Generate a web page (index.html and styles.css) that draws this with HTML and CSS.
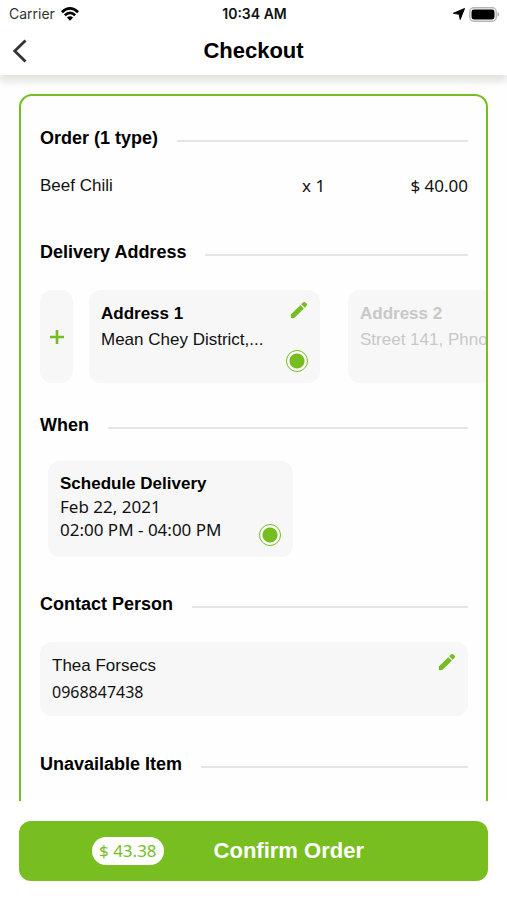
FILE: index.html
```html
<!DOCTYPE html>
<html lang="en">
<head>
<meta charset="utf-8">
<meta name="viewport" content="width=device-width, initial-scale=1">
<title>Checkout</title>
<link rel="stylesheet" href="styles.css">
</head>
<body>
<svg class="defs" width="0" height="0" aria-hidden="true">
  <symbol id="pencil" viewBox="0 0 18 18">
    <path d="M1 17C.6 15 .7 13.600 1.300 13L10.300 4.200 13.800 7.700 4.800 16.600C4 17.300 2.500 17.400 1 17ZM11.300 3.200 12.900 1.600Q14.300.3 15.800 1.700L16.400 2.300Q17.800 3.700 16.400 5.100L14.800 6.700Z"/>
  </symbol>
</svg>
<header class="top">
  <div class="status">
    <div class="carrier">
      <span>Carrier</span>
      <svg width="18" height="14" viewBox="0 0 18 14" aria-hidden="true">
        <g fill="none" stroke="#000" stroke-width="2.600">
          <path d="M.9 5.200Q9-2.400 17.100 5.200"/>
          <path d="M3.800 8.200Q9 3.400 14.200 8.200"/>
        </g>
        <path d="M5.900 10.500Q9 7.900 12.100 10.500L9 13.700Z"/>
      </svg>
    </div>
    <time class="clock">10:34 AM</time>
    <div class="indicators">
      <svg width="12" height="12" viewBox="0 0 12 12" aria-hidden="true"><path d="M11.500.5 7.200 11.500 6.200 6.300.4 5.300Z" stroke="#000" stroke-linejoin="round"/></svg>
      <svg width="31" height="15" viewBox="0 0 31 15" aria-hidden="true">
        <rect x=".8" y=".8" width="26.400" height="13.400" rx="4" fill="#fff" stroke="#b5b5b5" stroke-width="1.400"/>
        <rect x="2.500" y="2.500" width="23" height="10" rx="2.400"/>
        <path d="M28.500 5Q30.300 5.800 30.300 7.500T28.500 10Z" fill="#b5b5b5"/>
      </svg>
    </div>
  </div>
  <div class="navbar">
    <button class="back" type="button" aria-label="Back">
      <svg width="14" height="24" viewBox="0 0 14 24" aria-hidden="true"><path d="M12.500 1.500 1.700 12 12.500 22.500" fill="none" stroke="#333" stroke-width="2.800"/></svg>
    </button>
    <h1>Checkout</h1>
  </div>
</header>
<main>
  <div class="sheet">
    <section class="order">
      <h2>Order (1 type)</h2>
      <div class="item"><span>Beef Chili</span><span class="num">x 1</span><span class="num amount">$ 40.00</span></div>
    </section>
    <section class="delivery">
      <h2>Delivery Address</h2>
      <div class="addresses">
        <button class="add" type="button" aria-label="Add address">
          <svg width="14" height="14" viewBox="0 0 14 14" aria-hidden="true"><path d="M7 0V14M0 7H14" stroke="#76bd22" stroke-width="2.600"/></svg>
        </button>
        <div class="panel address">
          <label for="a1"><strong>Address 1</strong><span>Mean Chey District,...</span></label>
          <div class="tools">
            <button class="edit" type="button" aria-label="Edit address 1"><svg width="18" height="18" aria-hidden="true"><use href="#pencil"/></svg></button>
            <input id="a1" type="radio" name="address" checked>
          </div>
        </div>
        <div class="panel address muted"><div><strong>Address 2</strong><span>Street 141, Phnom Penh</span></div></div>
      </div>
    </section>
    <section class="when">
      <h2>When</h2>
      <div class="panel schedule">
        <label for="s1"><strong>Schedule Delivery</strong><span>Feb 22, 2021</span><span>02:00 PM - 04:00 PM</span></label>
        <input id="s1" type="radio" name="schedule" checked>
      </div>
    </section>
    <section class="person">
      <h2>Contact Person</h2>
      <div class="panel contact">
        <div><span>Thea Forsecs</span><span class="phone">0968847438</span></div>
        <button class="edit" type="button" aria-label="Edit contact"><svg width="18" height="18" aria-hidden="true"><use href="#pencil"/></svg></button>
      </div>
    </section>
    <section class="unavailable">
      <h2>Unavailable Item</h2>
    </section>
  </div>
</main>
<footer>
  <button class="confirm" type="button"><span class="total">$ 43.38</span><span>Confirm Order</span></button>
</footer>
</body>
</html>
```
FILE: styles.css
```css
* { box-sizing: border-box; }

body {
  margin: 0;
  height: 100vh;
  display: flex;
  flex-direction: column;
  overflow: hidden;
  background: #fefefe;
  color: #111;
  font: 17px/24px "Liberation Sans", Arial, sans-serif;
}

.defs { position: absolute; }
svg { display: block; }
button { margin: 0; padding: 0; border: 0; background: none; font: inherit; }

.top {
  position: relative;
  z-index: 1;
  background: #fff;
  box-shadow: 0 6px 8px #dfe2dc;
}

.status {
  display: grid;
  grid-template-columns: 1fr auto 1fr;
  align-items: center;
  height: 28px;
  padding: 0 7px 0 9px;
  font-family: Inter, sans-serif;
  font-size: 14px;
}
.carrier { display: flex; align-items: center; gap: 6px; color: #333; }
.clock { font-weight: 600; }
.indicators { display: flex; align-items: center; justify-content: flex-end; gap: 4px; }

.navbar {
  display: grid;
  grid-template-columns: 1fr auto 1fr;
  align-items: center;
  height: 47px;
  padding: 0 13px 2px;
}
.back { justify-self: start; }
h1 { margin: 0; font-size: 22px; line-height: 26px; color: #000; }

main { flex: 1; min-height: 0; overflow: hidden; padding: 19px 19px 0; }

.sheet {
  min-height: 900px;
  padding: 30px 18px 0 19px;
  border: 2px solid #76bd22;
  border-radius: 13px;
  overflow: hidden;
}

h2 {
  display: flex;
  align-items: center;
  gap: 19px;
  margin: 0 0 24px;
  font-size: 18px;
  color: #000;
}
h2::after { content: ""; flex: 1; height: 2px; margin-top: 6px; background: #e5e5e5; }

.order { margin-bottom: 42px; }
.delivery { margin-bottom: 30px; }
.delivery h2, .person h2 { margin-bottom: 26px; }
.when { margin-bottom: 35px; }
.person { margin-bottom: 36px; }

.item { display: grid; grid-template-columns: 262fr 60fr 106fr; }
.num, .total, .schedule span { font-family: "Noto Sans", sans-serif; }
.phone { font-family: "Noto Sans", sans-serif; font-size: 16px; }
.amount { text-align: right; }

.panel {
  display: flex;
  justify-content: space-between;
  padding: 11px 12px;
  border-radius: 12px;
  background: #f7f7f7;
  line-height: 26px;
}
.panel strong, .panel span { display: block; white-space: nowrap; }
.panel strong { color: #000; }

.addresses { display: flex; margin-right: -18px; overflow: hidden; }
.add {
  flex: none;
  display: grid;
  place-items: center;
  width: 33px;
  margin-right: 16px;
  border-radius: 12px;
  background: #f7f7f7;
}
.address { flex: none; width: 231px; height: 93px; margin-right: 28px; }
.panel.muted, .muted strong { color: #c8c8c8; }
.tools { display: flex; flex-direction: column; align-items: flex-end; justify-content: space-between; }
.edit { align-self: flex-start; color: #76bd22; fill: currentColor; }
.tools .edit { align-self: flex-end; }

input[type="radio"] {
  appearance: none;
  flex: none;
  width: 22px;
  height: 22px;
  margin: 0;
  border: 1px solid #76bd22;
  border-radius: 50%;
  background: #fff;
}
input[type="radio"]:checked { background: radial-gradient(circle, #76bd22 7px, #fff 8px); }

.schedule { width: 245px; height: 96px; margin-left: 8px; line-height: 23px; }
.schedule input { align-self: flex-end; }

footer { padding: 20px 19px 19px; background: #fff; }
.confirm {
  display: flex;
  align-items: center;
  gap: 50px;
  width: 100%;
  height: 60px;
  padding: 0 0 0 73px;
  border-radius: 12px;
  background: #78be21;
  color: #fff;
  font-size: 22px;
  font-weight: bold;
}
.total {
  padding: 0 7px;
  border-radius: 14px;
  background: #fff;
  color: #76bd22;
  font-size: 17px;
  font-weight: normal;
  line-height: 28px;
}
```
